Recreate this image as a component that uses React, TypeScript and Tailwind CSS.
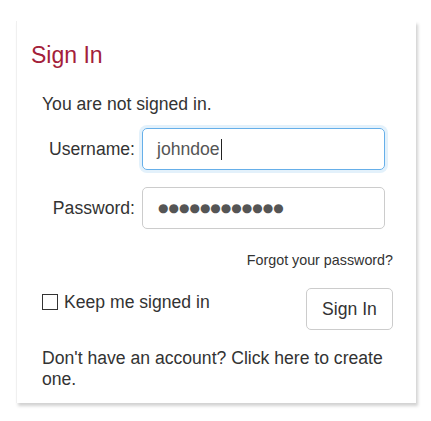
import React from "react";

export default function App() {
  return (
    <div className="min-h-[421px] w-[431px] bg-white pt-[21px] pl-[16px]" style={{ fontFamily: '"Liberation Sans", Arial, sans-serif' }}>
      <div className="w-[400px] bg-white px-[14px] pt-[21px] pb-[13px] shadow-[2px_3px_3px_rgba(0,0,0,0.18)] border-l border-[#f0f0f0]">
        <h1 className="text-[23px] leading-[26px] text-[#a3203a]">Sign In</h1>
        <div className="pl-[11px] pr-[9px] text-[#333] text-[17.6px]">
          <p className="mt-[26px] leading-[20px]">You are not signed in.</p>
          <div className="mt-[14px] flex items-center">
            <label className="w-[93px] text-right leading-[20px]">Username:</label>
            <div className="ml-[7px] flex h-[42px] w-[243px] items-center rounded-[5px] border border-[#66afe9] px-[14px] text-[#555] shadow-[0_0_0_3px_rgba(102,175,233,0.18)]">
              <span>johndoe</span>
              <span className="ml-[1px] inline-block h-[21px] w-px bg-[#222]" />
            </div>
          </div>
          <div className="mt-[17px] flex items-center">
            <label className="w-[93px] text-right leading-[20px]">Password:</label>
            <div className="ml-[7px] flex h-[42px] w-[243px] items-center rounded-[5px] border border-[#ccc] px-[15px] text-[#555]">
              <span className="text-[12px]" style={{ fontFamily: '"DejaVu Sans", sans-serif' }}>●●●●●●●●●●●●</span>
            </div>
          </div>
          <div className="mt-[23px] text-right text-[14.3px] leading-[17px]">
            <a className="text-[#333]">Forgot your password?</a>
          </div>
          <div className="mt-[19px] flex items-start justify-between">
            <label className="mt-[4px] flex items-center leading-[20px]">
              <span className="inline-block h-[16px] w-[16px] border border-[#333] bg-white" />
              <span className="ml-[6px]">Keep me signed in</span>
            </label>
            <button className="h-[42px] w-[87px] rounded-[5px] border border-[#ccc] bg-white text-[17.6px] text-[#333]">Sign In</button>
          </div>
          <p className="mt-[18px] w-[350px] leading-[21px]">
            Don't have an account? <a>Click here to create one.</a>
          </p>
        </div>
      </div>
    </div>
  );
}
